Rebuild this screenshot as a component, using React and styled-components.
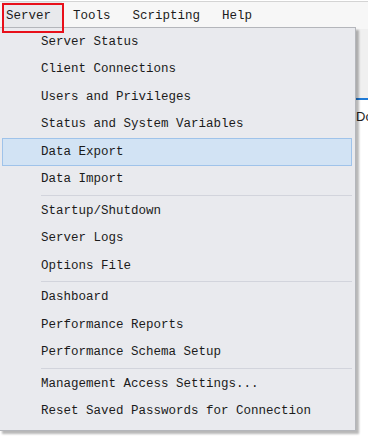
import React from "react";
import styled, { createGlobalStyle } from "styled-components";

const GlobalStyle = createGlobalStyle`
  html, body {
    margin: 0;
    padding: 0;
    background: #ffffff;
  }
  body {
    font-family: "Liberation Mono", "DejaVu Sans Mono", monospace;
  }
`;

const Window = styled.div`
  position: relative;
  width: 368px;
  height: 439px;
  overflow: hidden;
  background: #ffffff;
`;

const MenuBar = styled.div`
  height: 27px;
  margin-top: 1px;
  border-top: 1px solid #d4d4d4;
  background: #f7f7f7;
  display: flex;
  align-items: center;
  padding-left: 2px;
`;

const MenuTitle = styled.div`
  height: 100%;
  display: flex;
  align-items: center;
  padding: 0 11px 0 ${(p) => (p.$first ? "4px" : "11px")};
  font-size: 12.5px;
  color: #1b1b1b;
  background: ${(p) => (p.$open ? "#e8e9ec" : "transparent")};
`;

const Toolbar = styled.div`
  height: 69px;
  background: #f0f0f0;
  border-bottom: 2px solid #1f7ad6;
`;

const TabLabel = styled.div`
  padding: 9px 0 0 356px;
  font-family: "Liberation Sans", Arial, sans-serif;
  font-size: 13px;
  color: #222;
`;

const Highlight = styled.div`
  position: absolute;
  left: 2px;
  top: 3px;
  width: 58px;
  height: 26px;
  border: 2px solid #e8101a;
  z-index: 3;
`;

const Dropdown = styled.div`
  position: absolute;
  left: -1px;
  top: 27px;
  width: 355px;
  padding-bottom: 5px;
  background: #e9eaee;
  border: 1px solid #b4b6bb;
  box-shadow: 3px 3px 2px rgba(0, 0, 0, 0.28);
  z-index: 2;
`;

const Item = styled.div`
  height: 27.5px;
  box-sizing: border-box;
  display: flex;
  align-items: center;
  padding-left: 40px;
  margin: 0 3px 0 2px;
  font-size: 12.5px;
  color: #1b1b1b;
  white-space: nowrap;
  background: ${(p) => (p.$active ? "#d2e3f4" : "transparent")};
  border: 1px solid ${(p) => (p.$active ? "#9fc3ea" : "transparent")};
  padding-left: 38px;
`;

const Separator = styled.div`
  height: 1px;
  margin: 1.5px 3px 1.5px 41px;
  background: #d2d4dc;
`;

const groups = [
  [
    "Server Status",
    "Client Connections",
    "Users and Privileges",
    "Status and System Variables",
    "Data Export",
    "Data Import",
  ],
  ["Startup/Shutdown", "Server Logs", "Options File"],
  ["Dashboard", "Performance Reports", "Performance Schema Setup"],
  ["Management Access Settings...", "Reset Saved Passwords for Connection"],
];

const App = () => {
  return (
    <>
      <GlobalStyle />
      <Window>
        <MenuBar>
          <MenuTitle $first $open>Server</MenuTitle>
          <MenuTitle>Tools</MenuTitle>
          <MenuTitle>Scripting</MenuTitle>
          <MenuTitle>Help</MenuTitle>
        </MenuBar>
        <Toolbar />
        <TabLabel>Do</TabLabel>
        <Highlight />
        <Dropdown>
          {groups.map((g, gi) => (
            <React.Fragment key={gi}>
              {gi > 0 && <Separator />}
              {g.map((label) => (
                <Item key={label} $active={label === "Data Export"}>
                  {label}
                </Item>
              ))}
            </React.Fragment>
          ))}
        </Dropdown>
      </Window>
    </>
  );
};

export default App;
